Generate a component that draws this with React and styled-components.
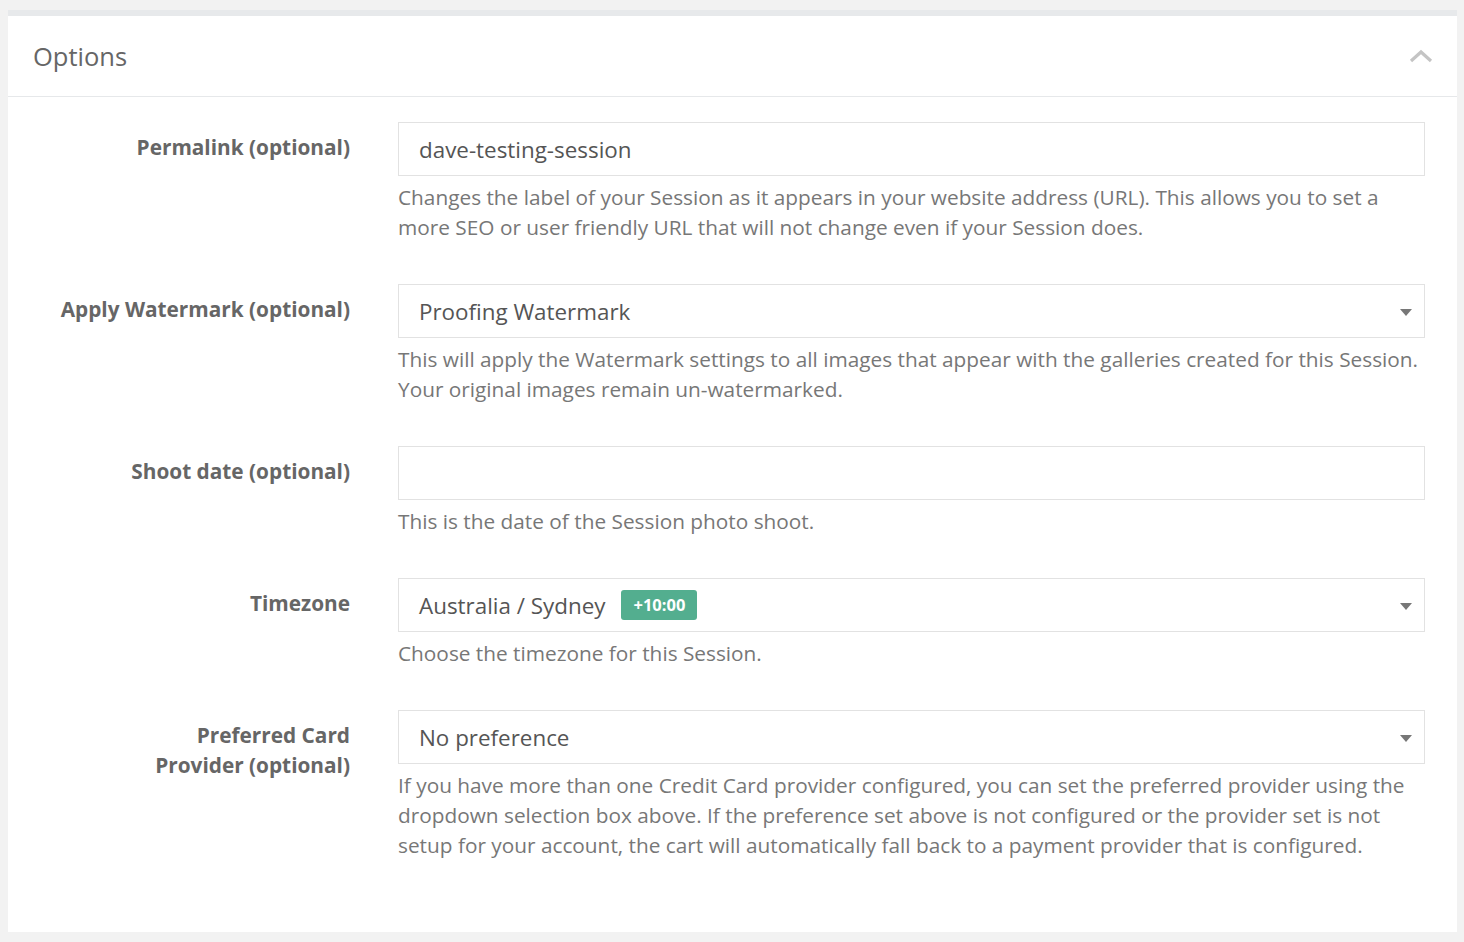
import React from 'react';
import styled, { createGlobalStyle } from 'styled-components';

const GlobalStyle = createGlobalStyle`
  html, body {
    margin: 0;
    padding: 0;
    background: #f2f2f2;
  }
  body {
    font-family: 'Open Sans', 'Noto Sans', sans-serif;
  }
`;

const Page = styled.div`
  padding: 10px 7px 9px 8px;
`;

const Panel = styled.section`
  background: #fff;
  border-top: 6px solid #e7e9eb;
`;

const PanelHeader = styled.header`
  height: 80px;
  display: flex;
  align-items: center;
  justify-content: space-between;
  padding: 0 24px 0 25px;
  border-bottom: 1px solid #e6e8ea;
`;

const Title = styled.h2`
  margin: 0;
  font-size: 25.5px;
  font-weight: 400;
  color: #666;
`;

const Body = styled.div`
  padding: 25px 32px 30px 0;
`;

const Row = styled.div`
  display: grid;
  grid-template-columns: 342px 1fr;
  column-gap: 48px;
  margin-bottom: 42px;
`;

const Label = styled.label`
  text-align: right;
  padding-top: 10px;
  font-size: 20.8px;
  line-height: 30px;
  font-weight: 700;
  color: #666;
`;

const Field = styled.div`
  height: 54px;
  box-sizing: border-box;
  border: 1px solid #e2e2e2;
  display: flex;
  align-items: center;
  padding: 0 20px;
  font-size: 22.4px;
  color: #555;
  position: relative;
`;

const Caret = styled.span`
  position: absolute;
  right: 12px;
  top: 24px;
  width: 0;
  height: 0;
  border-left: 6px solid transparent;
  border-right: 6px solid transparent;
  border-top: 7px solid #777;
`;

const Badge = styled.span`
  margin-left: 16px;
  background: #53ae8f;
  color: #fff;
  font-size: 16.5px;
  font-weight: 700;
  border-radius: 3px;
  padding: 0 12px;
  line-height: 30px;
`;

const Help = styled.p`
  margin: 6px 0 0;
  font-size: 20.8px;
  line-height: 30px;
  color: #777;
`;

const rows = [
  {
    label: 'Permalink (optional)',
    value: 'dave-testing-session',
    help: 'Changes the label of your Session as it appears in your website address (URL). This allows you to set a more SEO or user friendly URL that will not change even if your Session does.'
  },
  {
    label: 'Apply Watermark (optional)',
    value: 'Proofing Watermark',
    select: true,
    help: 'This will apply the Watermark settings to all images that appear with the galleries created for this Session. Your original images remain un-watermarked.'
  },
  {
    label: 'Shoot date (optional)',
    value: '',
    help: 'This is the date of the Session photo shoot.'
  },
  {
    label: 'Timezone',
    value: 'Australia / Sydney',
    badge: '+10:00',
    select: true,
    help: 'Choose the timezone for this Session.'
  },
  {
    label: <>Preferred Card<br />Provider (optional)</>,
    value: 'No preference',
    select: true,
    help: 'If you have more than one Credit Card provider configured, you can set the preferred provider using the dropdown selection box above. If the preference set above is not configured or the provider set is not setup for your account, the cart will automatically fall back to a payment provider that is configured.'
  }
];

export default function App() {
  return (
    <Page>
      <GlobalStyle />
      <Panel>
        <PanelHeader>
          <Title>Options</Title>
          <svg width="24" height="14" viewBox="0 0 24 14">
            <path d="M2 12 L12 3 L22 12" fill="none" stroke="#c4c4c4" strokeWidth="3.2" />
          </svg>
        </PanelHeader>
        <Body>
          {rows.map((row, i) => (
            <Row key={i}>
              <Label>{row.label}</Label>
              <div>
                <Field>
                  {row.value}
                  {row.badge && <Badge>{row.badge}</Badge>}
                  {row.select && <Caret />}
                </Field>
                <Help>{row.help}</Help>
              </div>
            </Row>
          ))}
        </Body>
      </Panel>
    </Page>
  );
}
